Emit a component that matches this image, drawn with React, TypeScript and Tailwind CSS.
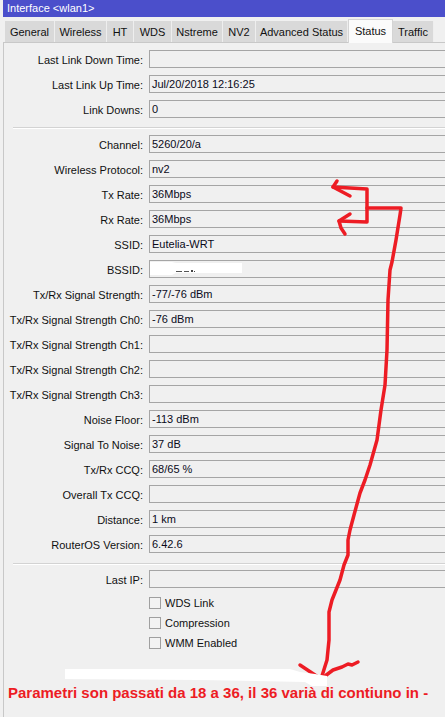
const tabs = [
  { name: 'General', w: 'w-[50px]' },
  { name: 'Wireless', w: 'w-[52px]' },
  { name: 'HT', w: 'w-[27px]' },
  { name: 'WDS', w: 'w-[38px]' },
  { name: 'Nstreme', w: 'w-[51px]' },
  { name: 'NV2', w: 'w-[33px]' },
  { name: 'Advanced Status', w: 'w-[92px]' },
  { name: 'Status', w: 'w-[45px]', active: true },
  { name: 'Traffic', w: 'w-[41px]' },
]

const linkRows = [
  ['Last Link Down Time', ''],
  ['Last Link Up Time', 'Jul/20/2018 12:16:25'],
  ['Link Downs', '0'],
]

const radioRows = [
  ['Channel', '5260/20/a'],
  ['Wireless Protocol', 'nv2'],
  ['Tx Rate', '36Mbps'],
  ['Rx Rate', '36Mbps'],
  ['SSID', 'Eutelia-WRT'],
  ['BSSID', ''],
  ['Tx/Rx Signal Strength', '-77/-76 dBm'],
  ['Tx/Rx Signal Strength Ch0', '-76 dBm'],
  ['Tx/Rx Signal Strength Ch1', ''],
  ['Tx/Rx Signal Strength Ch2', ''],
  ['Tx/Rx Signal Strength Ch3', ''],
  ['Noise Floor', '-113 dBm'],
  ['Signal To Noise', '37 dB'],
  ['Tx/Rx CCQ', '68/65 %'],
  ['Overall Tx CCQ', ''],
  ['Distance', '1 km'],
  ['RouterOS Version', '6.42.6'],
]

const Field = ({ label, value }: { label: string; value: string }) => (
  <div className="flex items-start h-[18px] mb-[7px] shrink-0">
    <div className="w-[140px] shrink-0 text-right pr-[1px] pt-[2px] leading-[16px] text-[#111]">{label}:</div>
    <div className="ml-[5px] w-[320px] shrink-0 h-[18px] border border-[#a5a5a5] bg-[#f0f0f0] pl-[2px] pt-[1px] leading-[15px] text-[#0a0a1a]">
      {value}
    </div>
  </div>
)

const Check = ({ label }: { label: string }) => (
  <div className="flex items-center h-[20px] pl-[145px]">
    <div className="w-[12px] h-[12px] border border-[#a0a0a0] bg-[#f3f3f3]" />
    <span className="ml-[4px] pt-[1px] text-[#111]">{label}</span>
  </div>
)

const Separator = ({ className }: { className: string }) => (
  <div className={`ml-[9px] h-[2px] shrink-0 border-t border-[#d3d3d3] border-b border-b-white ${className}`} />
)

export default function App() {
  return (
    <div className="relative w-[445px] h-[717px] overflow-hidden bg-[#f0f0f0] text-[11px] font-['Liberation_Sans',Arial,sans-serif]">
      <div className="ml-[3px]">
        <div className="h-[17px] bg-[#4b4fcb] text-white text-[11px] leading-[17px] pl-[4px]">Interface &lt;wlan1&gt;</div>

        <div className="h-[25px] flex items-end pl-[2px]">
          {tabs.map((t) =>
            t.active ? (
              <div
                key={t.name}
                className={`${t.w} h-[24px] mb-[-1px] relative z-10 bg-[#fbfbfb] border border-b-0 border-[#d4d4d4] flex items-center justify-center text-[#111]`}
              >
                {t.name}
              </div>
            ) : (
              <div
                key={t.name}
                className={`${t.w} h-[21px] bg-[#d9d9d9] border-r border-[#eeeeee] flex items-center justify-center pt-[1px] text-[#111]`}
              >
                {t.name}
              </div>
            ),
          )}
        </div>

        <div className="flex flex-col border-l border-t border-[#c8c8c8] h-[700px] pt-[7px]">
          {linkRows.map(([l, v]) => (
            <Field key={l} label={l} value={v} />
          ))}
          <Separator className="mt-[2px] mb-[6px]" />
          {radioRows.map(([l, v]) => (
            <Field key={l} label={l} value={v} />
          ))}
          <Separator className="mt-[3px] mb-[5px]" />
          <Field label="Last IP" value="" />
          <div className="mt-[-2px] flex flex-col">
            <Check label="WDS Link" />
            <Check label="Compression" />
            <Check label="WMM Enabled" />
          </div>
          <p className="mt-[31px] pl-[4px] text-[15px] leading-[17px] font-bold text-[#ed1c24] whitespace-nowrap">
            Parametri son passati da 18 a 36, il 36 varià di contiuno in -
          </p>
        </div>
      </div>

      <svg className="absolute inset-0 pointer-events-none" width="445" height="717" viewBox="0 0 445 717">
        <polygon points="150,262 172,262 176,263 242,263 242,273 176,273 172,275 150,275" fill="#ffffff" />
        <rect x="176" y="271" width="6" height="1" fill="#555" />
        <rect x="184" y="271" width="5" height="1" fill="#555" />
        <rect x="191" y="270" width="2" height="2" fill="#444" />
        <rect x="194" y="271" width="1" height="1" fill="#444" />
        <g fill="none" stroke="#ed1c24" strokeWidth="3.5" strokeLinecap="round" strokeLinejoin="round">
          <path d="M337,181 L333,187 L350,196" />
          <path d="M333,187 L367,189 L367,222 L339,221" />
          <path d="M350,214 L339,221 L341,228 L345,234" />
          <path d="M367,208 L401,208 L400,215 L396,240 L392,262 L390,270 L388,300 L387,350 L385,385 L381,410 L377,440 L370,465 L365,480 L360,493 L354,515 L350,530 L348,540 L348,555 L344,565 L340,580 L336,590 L332,600 L329,612 L329,640 L327,660 L321,679" />
          <path d="M300,665 L321,679 L333,670 L342,667 L348,664 L352,665 L358,662" />
        </g>
        <polygon points="65,669 290,669 300,672 315,674 327,676 327,686 312,686 305,682 200,680 65,679" fill="#ffffff" />
      </svg>
    </div>
  )
}
